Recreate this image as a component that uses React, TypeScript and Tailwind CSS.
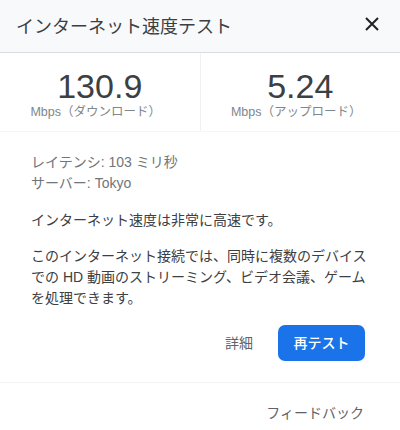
import React from "react";

const font = { fontFamily: '"Liberation Sans", "Noto Sans CJK JP", sans-serif' };

export default function App() {
  return (
    <div className="w-[400px] h-[430px] bg-white overflow-hidden" style={font}>
      <div className="h-[53px] bg-[#f8f9fa] border-b border-[#dadce0] flex items-center justify-between pl-[16px] pr-[20px]">
        <div className="text-[18px] leading-[24px] text-[#3c4043] pt-[2px]">インターネット速度テスト</div>
        <svg width="16" height="16" viewBox="0 0 16 16" className="mb-[4px]">
          <path d="M2 2 L14 14 M14 2 L2 14" stroke="#202124" strokeWidth="2" fill="none" />
        </svg>
      </div>
      <div className="flex border-b border-[#f6f6f6]">
        <div className="flex-1 flex flex-col items-center pt-[15px] pb-[11px] border-r border-[#f1f1f1]">
          <div className="text-[34px] leading-[36px] text-[#3c4043]">130.9</div>
          <div className="text-[12.5px] leading-[16px] text-[#80868b] pr-[8px]">Mbps（ダウンロード）</div>
        </div>
        <div className="flex-1 flex flex-col items-center pt-[15px] pb-[11px]">
          <div className="text-[34px] leading-[36px] text-[#3c4043]">5.24</div>
          <div className="text-[12.5px] leading-[16px] text-[#80868b] pr-[8px]">Mbps（アップロード）</div>
        </div>
      </div>
      <div className="pl-[31px] pr-[35px] pt-[20px]">
        <div className="text-[14px] leading-[21px] text-[#70757a]">
          <div>レイテンシ: 103 ミリ秒</div>
          <div>サーバー: Tokyo</div>
        </div>
        <div className="mt-[16px] text-[14px] leading-[21px] text-[#3c4043]">インターネット速度は非常に高速です。</div>
        <div className="mt-[15px] text-[14px] leading-[21px] text-[#3c4043] whitespace-nowrap">
          このインターネット接続では、同時に複数のデバイス
          <br />
          での HD 動画のストリーミング、ビデオ会議、ゲーム
          <br />
          を処理できます。
        </div>
        <div className="mt-[16px] flex justify-end items-center gap-[25px]">
          <div className="text-[14px] text-[#5f6368]">詳細</div>
          <div className="w-[87px] h-[36px] rounded-[7px] bg-[#1a73e8] text-white text-[14px] font-medium flex items-center justify-center">
            再テスト
          </div>
        </div>
      </div>
      <div className="mt-[21px] border-t border-[#f3f3f3] flex justify-end pr-[36px] pt-[20px]">
        <div className="text-[14px] leading-[21px] text-[#5f6368]">フィードバック</div>
      </div>
    </div>
  );
}
